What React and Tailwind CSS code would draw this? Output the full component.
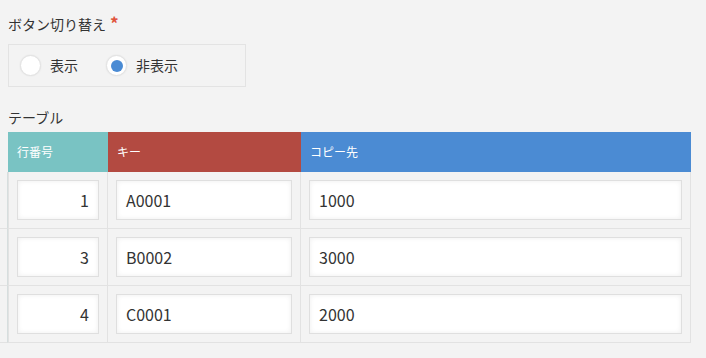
import React from 'react'

const ROWS = [
  { no: '1', key: 'A0001', dest: '1000' },
  { no: '3', key: 'B0002', dest: '3000' },
  { no: '4', key: 'C0001', dest: '2000' },
]

const font = { fontFamily: '"Noto Sans CJK JP", "Noto Sans", sans-serif' }

function Radio({ checked, label }) {
  return (
    <label className="flex items-center">
      <span className="w-[21px] h-[21px] rounded-full bg-white border border-[#e2e2e2] shadow-[0_0_2px_rgba(0,0,0,0.08)] flex items-center justify-center">
        {checked && <span className="w-[12px] h-[12px] rounded-full bg-[#4a8bd4]" />}
      </span>
      <span className="ml-[9px] text-[14px] text-[#333]">{label}</span>
    </label>
  )
}

function Field({ value, right }) {
  return (
    <div
      className={`h-[40px] bg-white border border-[#dfdfdf] shadow-[inset_0_0_5px_rgba(0,0,0,0.07)] flex items-center px-[9px] text-[16px] text-[#333] ${
        right ? 'justify-end' : ''
      }`}
    >
      {value}
    </div>
  )
}

export default function App() {
  return (
    <div className="min-h-[358px] bg-[#f3f3f3] pt-[14px]" style={font}>
      <div className="pl-2">
        <div className="flex items-start text-[14px] leading-[20px] text-[#333]">
          ボタン切り替え
          <span className="ml-[4px] text-[#e0543c] text-[17px] font-bold leading-[17px]">*</span>
        </div>

        <div className="mt-[10px] w-[238px] h-[43px] border border-[#e3e3e3] flex items-center pl-[11px] gap-[28px]">
          <Radio label="表示" />
          <Radio checked label="非表示" />
        </div>

        <div className="mt-[20px] text-[14px] leading-[20px] text-[#333]">テーブル</div>
      </div>

      <div className="mt-[5px]">
        {/* header */}
        <div className="flex h-[40px] text-[12px] text-white">
          <div className="w-[8px]" />
          <div className="w-[100px] bg-[#79c3c3] flex items-center pl-[9px]">行番号</div>
          <div className="w-[193px] bg-[#b34a41] flex items-center pl-[9px]">キー</div>
          <div className="w-[390px] bg-[#4b8bd3] flex items-center pl-[9px]">コピー先</div>
        </div>

        {/* rows */}
        {ROWS.map((r, i) => (
          <div key={i} className="flex">
            <div className="w-[8px] border-r border-[#d6dede] border-b border-b-[#e2e2e2]" />
            <div className="w-[100px] border-l border-r border-b border-[#e2e2e2] p-2">
              <Field value={r.no} right />
            </div>
            <div className="w-[193px] border-r border-b border-[#e2e2e2] p-2">
              <Field value={r.key} />
            </div>
            <div className="w-[390px] border-r border-b border-[#e2e2e2] p-2">
              <Field value={r.dest} />
            </div>
          </div>
        ))}
      </div>
    </div>
  )
}
